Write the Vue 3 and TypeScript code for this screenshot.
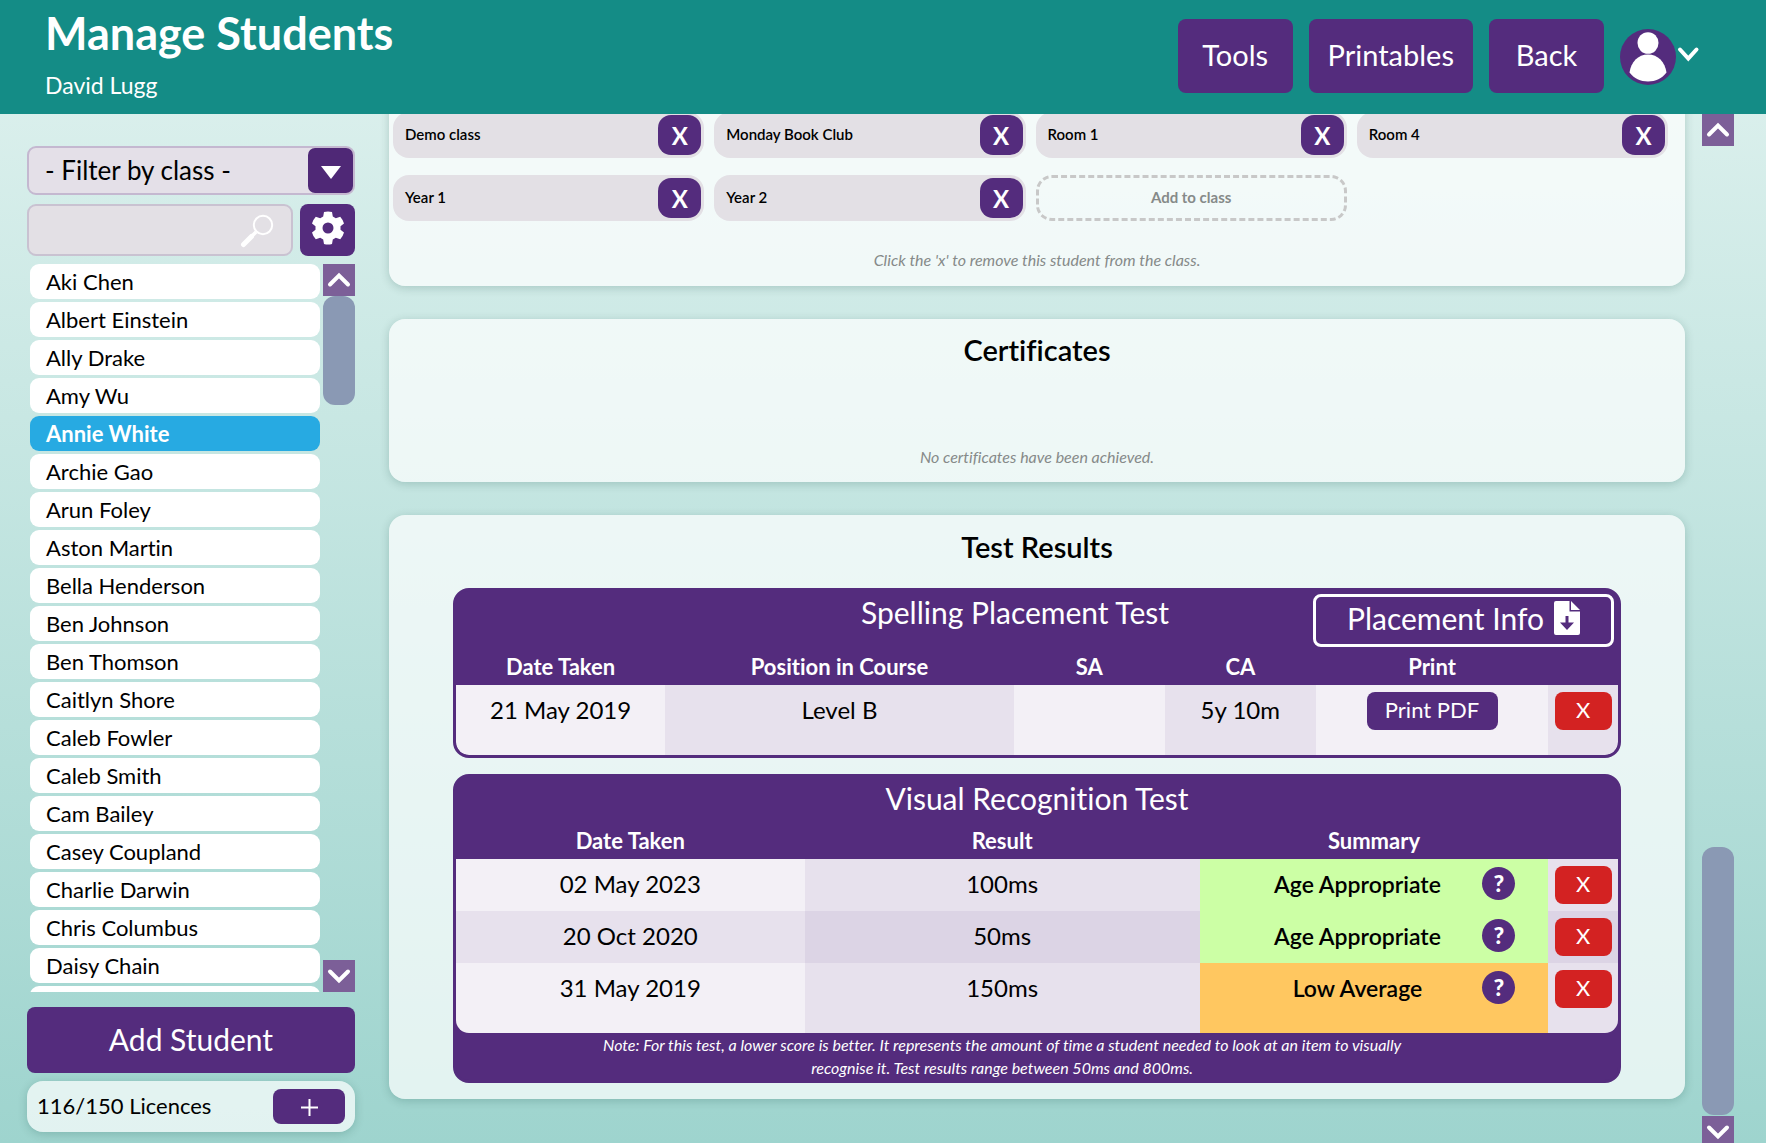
<script setup lang="ts">
import { ref } from 'vue'

interface VisualResult {
  date: string
  result: string
  summary: string
  tone: 'good' | 'low'
}

const students: string[] = [
  'Aki Chen', 'Albert Einstein', 'Ally Drake', 'Amy Wu', 'Annie White', 'Archie Gao',
  'Arun Foley', 'Aston Martin', 'Bella Henderson', 'Ben Johnson', 'Ben Thomson',
  'Caitlyn Shore', 'Caleb Fowler', 'Caleb Smith', 'Cam Bailey', 'Casey Coupland',
  'Charlie Darwin', 'Chris Columbus', 'Daisy Chain',
]
const selected = ref('Annie White')
const search = ref('')

const classes: string[] = ['Demo class', 'Monday Book Club', 'Room 1', 'Room 4', 'Year 1', 'Year 2']

const visualResults: VisualResult[] = [
  { date: '02 May 2023', result: '100ms', summary: 'Age Appropriate', tone: 'good' },
  { date: '20 Oct 2020', result: '50ms', summary: 'Age Appropriate', tone: 'good' },
  { date: '31 May 2019', result: '150ms', summary: 'Low Average', tone: 'low' },
]
</script>

<template>
  <div class="page">
    <header class="topbar">
      <div class="heading">
        <h1>Manage Students</h1>
        <p>David Lugg</p>
      </div>
      <nav class="actions">
        <button type="button" class="nav-btn">Tools</button>
        <button type="button" class="nav-btn">Printables</button>
        <button type="button" class="nav-btn">Back</button>
        <button type="button" class="account" aria-label="Account menu">
          <svg width="56" height="56" viewBox="0 0 56 56">
            <circle cx="28" cy="28" r="28" fill="#542c7d" />
            <ellipse cx="28" cy="14" rx="10.5" ry="10.8" fill="#fff" />
            <path d="M9.5 43.500C11 33 18 25.500 28 25.500S45 33 46.500 43.500C42 49.500 35.500 52.500 28 52.500S14 49.500 9.500 43.500Z" fill="#fff" />
          </svg>
          <svg class="account-chevron" width="24" height="20" viewBox="0 0 24 20">
            <path d="M4 4.500 12.300 13.500 20.500 4.500" fill="none" stroke="#fff" stroke-width="4" stroke-linecap="round" />
          </svg>
        </button>
      </nav>
    </header>

    <div class="body">
      <aside class="sidebar">
        <div class="filter">
          <select aria-label="Filter by class">
            <option>- Filter by class -</option>
          </select>
          <span class="filter-arrow">
            <svg width="20" height="14" viewBox="0 0 20 14"><path d="M0 0H20L10 13Z" fill="#fff" /></svg>
          </span>
        </div>
        <div class="search-row">
          <div class="search">
            <input v-model="search" type="text" aria-label="Search students" />
            <svg class="search-icon" width="34" height="34" viewBox="0 0 34 34">
              <circle cx="23" cy="11" r="9.200" fill="none" stroke="#fff" stroke-width="2" />
              <path d="M11.500 22.500 3.500 30.500" stroke="#fff" stroke-width="5" stroke-linecap="round" />
              <path d="M12.500 21.500 16 18" stroke="#fff" stroke-width="3.500" />
            </svg>
          </div>
          <button type="button" class="gear" aria-label="Settings">
            <svg width="32" height="34" viewBox="0 0 32 34">
              <path fill="#fff" fill-rule="evenodd" d="M12 1Q16 0 20 1L20.800 5.600 23.800 7.300 28.200 5.700Q31 8.700 32 12.500L28.500 15.300V18.700L32 21.500Q31 25.300 28.200 28.300L23.800 26.700 20.800 28.400 20 33Q16 34 12 33L11.200 28.400 8.200 26.700 3.800 28.300Q1 25.300 0 21.500L3.500 18.700V15.300L0 12.500Q1 8.700 3.800 5.700L8.200 7.300 11.200 5.600ZM16 11.500A5.500 5.500 0 1 0 16 22.500A5.500 5.500 0 1 0 16 11.500Z" />
            </svg>
          </button>
        </div>

        <div class="list-area">
          <ul class="students">
            <li v-for="name in students" :key="name">
              <button type="button" :class="{ active: name === selected }" @click="selected = name">{{ name }}</button>
            </li>
            <li><div class="peek"></div></li>
          </ul>
          <div class="scrollbar">
            <button type="button" class="scroll-btn" aria-label="Scroll list up">
              <svg width="32" height="32" viewBox="0 0 32 32"><path d="M7 20.500 16 11.500 25 20.500" /></svg>
            </button>
            <div class="thumb list-thumb"></div>
            <button type="button" class="scroll-btn end" aria-label="Scroll list down">
              <svg width="32" height="32" viewBox="0 0 32 32"><path d="M7 11.500 16 20.500 25 11.500" /></svg>
            </button>
          </div>
        </div>

        <button type="button" class="add-student">Add Student</button>
        <div class="licences">
          <span>116/150 Licences</span>
          <button type="button" aria-label="Add licences">
            <svg width="17" height="17" viewBox="0 0 17 17"><path d="M8.500 0V17M0 8.500H17" stroke="#fff" stroke-width="2" /></svg>
          </button>
        </div>
      </aside>

      <main class="content">
        <section class="card classes">
          <div class="chips">
            <div v-for="name in classes" :key="name" class="chip">
              <span>{{ name }}</span>
              <button type="button" :aria-label="`Remove from ${name}`">X</button>
            </div>
            <button type="button" class="add-class">Add to class</button>
          </div>
          <p class="hint">Click the 'x' to remove this student from the class.</p>
        </section>

        <section class="card certificates">
          <h2>Certificates</h2>
          <p class="hint">No certificates have been achieved.</p>
        </section>

        <section class="card results">
          <h2>Test Results</h2>

          <div class="test">
            <div class="test-head tall">
              <h3>Spelling Placement Test</h3>
              <button type="button" class="info-btn">
                Placement Info
                <svg width="26" height="34" viewBox="0 0 26 34">
                  <path fill="#fff" d="M2 0H15.500V10.500H26V32Q26 34 24 34H2Q0 34 0 32V2Q0 0 2 0ZM17 0 26 9H17Z" />
                  <path fill="#542c7d" d="M11.500 15H14.500V21.500H20L13 29 6 21.500H11.500Z" />
                </svg>
              </button>
            </div>
            <table>
              <colgroup>
                <col class="w18" /><col class="w30" /><col class="w13" /><col class="w13" /><col class="w20" /><col class="w6" />
              </colgroup>
              <thead>
                <tr><th>Date Taken</th><th>Position in Course</th><th>SA</th><th>CA</th><th>Print</th><th></th></tr>
              </thead>
              <tbody>
                <tr>
                  <td>21 May 2019</td>
                  <td class="alt">Level B</td>
                  <td></td>
                  <td class="alt">5y 10m</td>
                  <td><button type="button" class="print-btn">Print PDF</button></td>
                  <td class="alt"><button type="button" class="del-btn">X</button></td>
                </tr>
              </tbody>
            </table>
          </div>

          <div class="test">
            <div class="test-head">
              <h3>Visual Recognition Test</h3>
            </div>
            <table>
              <colgroup>
                <col class="w30" /><col class="w34" /><col class="w30" /><col class="w6" />
              </colgroup>
              <thead>
                <tr><th>Date Taken</th><th>Result</th><th>Summary</th><th></th></tr>
              </thead>
              <tbody>
                <tr v-for="row in visualResults" :key="row.date">
                  <td>{{ row.date }}</td>
                  <td class="alt">{{ row.result }}</td>
                  <td :class="row.tone">
                    <div class="summary">
                      <span>{{ row.summary }}</span>
                      <button type="button" class="help">?</button>
                    </div>
                  </td>
                  <td class="alt"><button type="button" class="del-btn">X</button></td>
                </tr>
              </tbody>
            </table>
            <p class="note">
              Note: For this test, a lower score is better. It represents the amount of time a student needed to look at an item to visually recognise it. Test results range between 50ms and 800ms.
            </p>
          </div>
        </section>
      </main>

      <div class="scrollbar page-scroll">
        <button type="button" class="scroll-btn" aria-label="Scroll up">
          <svg width="32" height="32" viewBox="0 0 32 32"><path d="M7 20.500 16 11.500 25 20.500" /></svg>
        </button>
        <div class="thumb page-thumb"></div>
        <button type="button" class="scroll-btn" aria-label="Scroll down">
          <svg width="32" height="32" viewBox="0 0 32 32"><path d="M7 11.500 16 20.500 25 11.500" /></svg>
        </button>
      </div>
    </div>
  </div>
</template>

<style>
body {
  margin: 0;
}
</style>

<style scoped>
* {
  box-sizing: border-box;
}

.page {
  display: flex;
  flex-direction: column;
  height: 100vh;
  overflow: hidden;
  font-family: Lato, "Noto Sans", sans-serif;
  font-size: 22px;
  font-variant-ligatures: none;
  color: #000;
  background: linear-gradient(#e0f2ef, #9ed4ce);
}

h1, h2, h3, p, ul {
  margin: 0;
  padding: 0;
  font-weight: 400;
}

ul {
  list-style: none;
}

button, select, input {
  margin: 0;
  padding: 0;
  border: 0;
  font: inherit;
  color: inherit;
}

button {
  cursor: pointer;
  color: #fff;
  background: #542c7d;
}

svg {
  display: block;
  flex: none;
}

/* Top bar */
.topbar {
  flex: none;
  display: flex;
  justify-content: space-between;
  height: 114px;
  padding: 0 66px 0 45px;
  color: #fff;
  background: #148c86;
}

.heading h1 {
  padding-top: 5px;
  font-size: 45px;
  font-weight: 700;
  line-height: 56px;
}

.heading p {
  padding-top: 7px;
  font-size: 23px;
  line-height: 34px;
}

.actions {
  display: flex;
  align-items: flex-start;
  gap: 16px;
  padding-top: 19px;
}

.nav-btn {
  min-width: 115px;
  height: 74px;
  padding: 0 19px 3px;
  border-radius: 8px;
  font-size: 29px;
}

.account {
  display: flex;
  align-items: center;
  margin-top: 10px;
  background: none;
}

.account-chevron {
  margin-bottom: 5px;
}

/* Sidebar */
.body {
  flex: 1;
  min-height: 0;
  display: flex;
}

.sidebar {
  flex: none;
  display: flex;
  flex-direction: column;
  gap: 8px;
  width: 355px;
  padding: 32px 0 11px 27px;
}

.filter {
  position: relative;
  flex: none;
  height: 49px;
  margin-bottom: 1px;
}

.filter select {
  appearance: none;
  width: 100%;
  height: 100%;
  padding: 0 0 2px 16px;
  border: 2px solid #c4b8d0;
  border-radius: 9px;
  font-size: 26px;
  background: #e4e0e8;
}

.filter-arrow {
  position: absolute;
  top: 2px;
  right: 2px;
  display: grid;
  place-items: center;
  width: 45px;
  height: 45px;
  padding-top: 4px;
  border-radius: 7px;
  background: #4f2876;
  pointer-events: none;
}

.search-row {
  flex: none;
  display: flex;
  gap: 7px;
  height: 52px;
}

.search {
  position: relative;
  flex: 1;
}

.search input {
  width: 100%;
  height: 100%;
  padding: 0 56px 0 12px;
  border: 2px solid #c9c2d1;
  border-radius: 9px;
  background: #e3e0e5;
}

.search-icon {
  position: absolute;
  top: 10px;
  right: 19px;
}

.gear {
  display: grid;
  place-items: center;
  width: 55px;
  padding-bottom: 4px;
  border-radius: 8px;
}

.list-area {
  flex: 1;
  min-height: 0;
  display: flex;
  gap: 3px;
  margin-bottom: 7px;
}

.students {
  flex: 1;
  display: flex;
  flex-direction: column;
  gap: 3px;
  padding-left: 3px;
  overflow: hidden;
}

.students button, .peek {
  display: block;
  width: 100%;
  height: 35px;
  padding: 0 16px;
  border-radius: 9px;
  line-height: 33px;
  text-align: left;
  color: #000;
  background: #fff;
}

.students button.active {
  font-weight: 700;
  color: #fff;
  background: #27aae2;
}

.scrollbar {
  display: flex;
  flex-direction: column;
  flex: none;
  width: 32px;
}

.scroll-btn {
  flex: none;
  height: 32px;
  background: #7c5f98;
}

.scroll-btn.end {
  margin-top: auto;
}

.scroll-btn path {
  fill: none;
  stroke: #fff;
  stroke-width: 4;
  stroke-linecap: round;
}

.thumb {
  flex: none;
  border-radius: 12px;
  background: #8a99b4;
}

.list-thumb {
  height: 15%;
}

.add-student {
  flex: none;
  height: 66px;
  padding-bottom: 3px;
  border-radius: 8px;
  font-size: 30px;
}

.licences {
  flex: none;
  display: flex;
  align-items: center;
  justify-content: space-between;
  height: 51px;
  padding: 0 10px;
  border-radius: 16px;
  background: rgba(255, 255, 255, 0.7);
  box-shadow: 0 2px 10px rgba(0, 60, 50, 0.2);
}

.licences span {
  padding-bottom: 2px;
}

.licences button {
  display: grid;
  place-items: center;
  width: 72px;
  height: 35px;
  padding-top: 2px;
  border-radius: 8px;
}

/* Main column, resting at the end of its scroll range */
.content {
  flex: 1;
  min-width: 0;
  display: flex;
  flex-direction: column;
  justify-content: flex-end;
  gap: 33px;
  padding: 0 17px 44px 34px;
  overflow: hidden;
}

.card {
  flex: none;
  border-radius: 16px;
  text-align: center;
  background: rgba(255, 255, 255, 0.7);
  box-shadow: 0 2px 10px rgba(0, 60, 50, 0.2);
}

.card h2 {
  font-size: 29px;
  font-weight: 600;
  line-height: 40px;
}

.hint {
  font-size: 16px;
  font-style: italic;
  line-height: 24px;
  color: #868a89;
}

.classes {
  padding: 20px 17px 14px 4px;
}

.classes .hint {
  padding-left: 13px;
}

.chips {
  display: grid;
  grid-template-columns: repeat(4, 1fr);
  gap: 17px 10px;
  margin-bottom: 27px;
}

.chip {
  display: flex;
  align-items: center;
  justify-content: space-between;
  height: 46px;
  padding: 0 3px 0 12px;
  border-radius: 16px;
  font-size: 15px;
  font-weight: 600;
  background: #e3e0e5;
}

.chip span {
  padding-bottom: 2px;
}

.chip button {
  width: 43px;
  height: 40px;
  border-radius: 13px;
  font-size: 24px;
  font-weight: 700;
}

.add-class {
  height: 46px;
  padding-bottom: 2px;
  border: 3px dashed #c8c8c8;
  border-radius: 16px;
  font-size: 15px;
  font-weight: 700;
  color: #868a89;
  background: none;
}

.certificates {
  display: flex;
  flex-direction: column;
  justify-content: space-between;
  height: 163px;
  padding: 11px 0 13px;
}

.results {
  padding: 12px 64px 16px;
}

.test {
  margin-top: 16px;
  border: 3px solid #542c7d;
  border-radius: 16px;
  overflow: hidden;
  background: #542c7d;
}

h2 + .test {
  margin-top: 21px;
}

.test-head {
  position: relative;
  height: 46px;
  color: #fff;
}

.test-head.tall {
  height: 58px;
  padding-right: 44px;
}

.test-head h3 {
  font-size: 30px;
  line-height: 43px;
}

.info-btn {
  position: absolute;
  top: 3px;
  right: 4px;
  display: flex;
  align-items: center;
  justify-content: center;
  gap: 10px;
  width: 301px;
  height: 53px;
  padding-bottom: 5px;
  border: 3px solid #fff;
  border-radius: 8px;
  font-size: 30px;
}

table {
  width: 100%;
  table-layout: fixed;
  border-collapse: separate;
  border-spacing: 0;
  border-radius: 0 0 13px 13px;
  overflow: hidden;
}

.w6 { width: 6%; }
.w13 { width: 13%; }
.w18 { width: 18%; }
.w20 { width: 20%; }
.w30 { width: 30%; }
.w34 { width: 34%; }

th {
  height: 36px;
  padding: 0;
  font-weight: 700;
  line-height: 36px;
  color: #fff;
}

td {
  height: 52px;
  padding: 7px 0;
  vertical-align: top;
  font-size: 24px;
  line-height: 36px;
  background: #f3f0f6;
}

td.alt {
  background: #e7e1ed;
}

tbody tr:nth-child(even) td {
  background: #e7e1ed;
}

tbody tr:nth-child(even) td.alt {
  background: #dcd4e5;
}

tbody tr:last-child td {
  height: 70px;
}

tbody tr td.good {
  background: #ccffa5;
}

tbody tr td.low {
  background: #ffc760;
}

.good, .low {
  font-weight: 600;
}

.summary {
  display: flex;
  align-items: center;
  padding: 0 33px;
  font-size: 23px;
}

.summary span {
  flex: 1;
}

.help {
  width: 33px;
  height: 33px;
  margin-bottom: 2px;
  border-radius: 50%;
  font-weight: 900;
  line-height: 33px;
}

.print-btn, .del-btn {
  display: block;
  height: 38px;
  margin: 0 auto;
  padding-bottom: 3px;
  border-radius: 8px;
  font-size: 22px;
}

.print-btn {
  width: 131px;
}

.del-btn {
  width: 57px;
  background: #d32222;
}

.note {
  width: 94%;
  padding: 0 130px 1px;
  font-size: 16px;
  font-style: italic;
  line-height: 23px;
  color: #fff;
}

/* The down arrow runs slightly past the bottom of the window */
.page-scroll {
  margin: 0 32px -5px 0;
}

.page-thumb {
  height: 268px;
  margin: auto 0 1px;
}
</style>
